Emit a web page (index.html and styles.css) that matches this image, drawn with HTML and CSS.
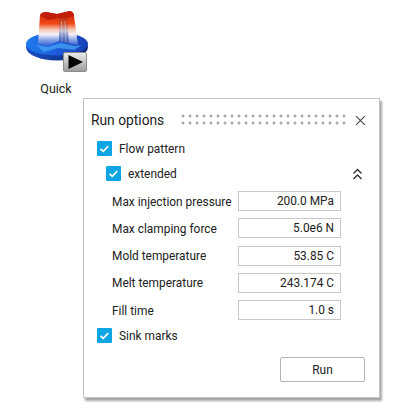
FILE: index.html
```html
<!DOCTYPE html>
<html lang="en">
<head>
    <meta charset="UTF-8">
    <title>Run options</title>
    <link rel="stylesheet" href="styles.css">
</head>
<body>
    <div class="desktop-icon">
        <svg class="quick-icon" width="64" height="64" viewBox="0 0 64 64">
            <defs>
                <linearGradient id="body" gradientUnits="userSpaceOnUse" x1="0" y1="2" x2="0" y2="38">
                    <stop offset="0" stop-color="#c41c08"/>
                    <stop offset="0.35" stop-color="#f04a18"/>
                    <stop offset="0.52" stop-color="#f6c8b8"/>
                    <stop offset="0.65" stop-color="#f4f2f6"/>
                    <stop offset="0.82" stop-color="#7f9ce4"/>
                    <stop offset="1" stop-color="#1f50d2"/>
                </linearGradient>
                <linearGradient id="bodydark" gradientUnits="userSpaceOnUse" x1="0" y1="2" x2="0" y2="38">
                    <stop offset="0" stop-color="#a81808"/>
                    <stop offset="0.35" stop-color="#d04a22"/>
                    <stop offset="0.55" stop-color="#c8c2d2"/>
                    <stop offset="0.75" stop-color="#5a78c4"/>
                    <stop offset="1" stop-color="#173a9e"/>
                </linearGradient>
                <linearGradient id="base" x1="0" y1="0" x2="1" y2="0">
                    <stop offset="0" stop-color="#1f7cf0"/>
                    <stop offset="0.5" stop-color="#1d5ad8"/>
                    <stop offset="1" stop-color="#1740b4"/>
                </linearGradient>
                <linearGradient id="rim" x1="0" y1="0" x2="1" y2="0">
                    <stop offset="0" stop-color="#1850c8"/>
                    <stop offset="0.5" stop-color="#123a9c"/>
                    <stop offset="1" stop-color="#0d2a78"/>
                </linearGradient>
                <linearGradient id="btn" x1="0" y1="0" x2="0" y2="1">
                    <stop offset="0" stop-color="#ececec"/>
                    <stop offset="1" stop-color="#9c9c9c"/>
                </linearGradient>
            </defs>
            <g class="raster">
                <ellipse cx="33" cy="38" rx="31" ry="13.5" fill="url(#rim)"/>
                <ellipse cx="33" cy="35" rx="31" ry="11.5" fill="url(#base)"/>
                <path d="M12 36 L24 38 L36 34 L52 37 L58 36 L50 41 L34 39 L20 43Z" fill="#45a4f6" opacity="0.75"/>
                <path d="M16 6 Q18 3 22 3 L33 5 L46 2 Q50 3 50 7 L54 36 L44 34 L35 32 L24 37 L14 35Z" fill="url(#body)"/>
                <path d="M35 9 L43 9 L45 34 L35 32Z" fill="url(#bodydark)"/>
                <path d="M37.5 12 L38 32 M41 12 L42 33" stroke="#f2f0f6" stroke-width="0.8" opacity="0.5" fill="none"/>
                <path d="M16 6 Q18 3 22 3 L33 5 L46 2 Q50 3 50 7 L43 9 L35 9 L24 11Z" fill="#c01e0a"/>
                <rect x="39.5" y="43.5" width="23" height="19" rx="1.5" fill="url(#btn)" stroke="#8a8a8a"/>
                <path d="M44.5 46 L59 53 L44.5 60Z" fill="#050505"/>
            </g>
        </svg>
        <span class="icon-label">Quick</span>
    </div>

    <div class="panel">
        <div class="panel-head">
            <span class="panel-title">Run options</span>
            <span class="grip"></span>
            <svg class="close" width="11" height="11" viewBox="0 0 11 11">
                <path d="M1 1 L10 10 M10 1 L1 10" stroke="#444" stroke-width="1.1" fill="none"/>
            </svg>
        </div>

        <label class="check">
            <span class="box"><svg width="15" height="15" viewBox="0 0 15 15"><path d="M3.5 7.8 L6.3 10.4 L11.3 5" stroke="#fff" stroke-width="1.7" fill="none"/></svg></span>
            <span class="check-text">Flow pattern</span>
        </label>

        <div class="extended-row">
            <label class="check">
                <span class="box"><svg width="15" height="15" viewBox="0 0 15 15"><path d="M3.5 7.8 L6.3 10.4 L11.3 5" stroke="#fff" stroke-width="1.7" fill="none"/></svg></span>
                <span class="check-text">extended</span>
            </label>
            <svg class="collapse" width="11" height="12" viewBox="0 0 11 12">
                <path d="M1.5 5.5 L5.5 1.5 L9.5 5.5 M1.5 11 L5.5 7 L9.5 11" stroke="#333" stroke-width="1.4" fill="none"/>
            </svg>
        </div>

        <div class="fields">
            <div class="field"><span class="field-label">Max injection pressure</span><div class="value">200.0 MPa</div></div>
            <div class="field"><span class="field-label">Max clamping force</span><div class="value">5.0e6 N</div></div>
            <div class="field"><span class="field-label">Mold temperature</span><div class="value">53.85 C</div></div>
            <div class="field"><span class="field-label">Melt temperature</span><div class="value">243.174 C</div></div>
            <div class="field"><span class="field-label">Fill time</span><div class="value">1.0 s</div></div>
        </div>

        <label class="check check-sink">
            <span class="box"><svg width="15" height="15" viewBox="0 0 15 15"><path d="M3.5 7.8 L6.3 10.4 L11.3 5" stroke="#fff" stroke-width="1.7" fill="none"/></svg></span>
            <span class="check-text">Sink marks</span>
        </label>

        <div class="actions">
            <button class="btn">Run</button>
        </div>
    </div>
</body>
</html>
```

FILE: styles.css
```css
* {
    margin: 0;
    padding: 0;
    box-sizing: border-box;
}

body {
    font-family: Roboto, 'Liberation Sans', sans-serif;
    font-size: 11.9px;
    color: #222;
    background: #fff;
    width: 402px;
    height: 410px;
    overflow: hidden;
    padding-top: 9px;
}

.desktop-icon {
    width: 112px;
    height: 89px;
    display: flex;
    flex-direction: column;
    align-items: center;
}

.quick-icon {
    display: block;
}

.raster {
    filter: blur(0.4px);
}

.icon-label {
    margin-top: 8px;
    line-height: 16px;
    font-size: 12.5px;
}

.panel {
    width: 297px;
    height: 300px;
    margin-left: 83px;
    border: 1px solid #c4c4c4;
    box-shadow: 2px 3px 2px rgba(0, 0, 0, 0.35);
    background: #fff;
    padding: 0 13px;
}

.panel-head {
    display: flex;
    align-items: center;
    height: 42px;
    margin-left: -6px;
}

.panel-title {
    font-size: 13.8px;
    width: 91px;
}

.grip {
    width: 168px;
    height: 14px;
    background-image: radial-gradient(circle, #8c8c8c 1.1px, transparent 1.4px);
    background-size: 7px 7px;
    background-position: -1.5px -0.5px;
}

.close {
    margin-left: 9px;
}

.check {
    display: flex;
    align-items: center;
    gap: 7px;
    height: 15px;
    line-height: 15px;
}

.check-text {
    margin-top: 2px;
}

.box {
    width: 15px;
    height: 15px;
    background: #0ea5e4;
    border-radius: 1px;
    display: block;
}

.box svg {
    display: block;
}

.extended-row {
    display: flex;
    justify-content: space-between;
    align-items: center;
    margin: 10px 0 0 9px;
    height: 15px;
}

.collapse {
    margin-right: 3px;
}

.fields {
    display: flex;
    flex-direction: column;
    gap: 7.25px;
    margin: 10px 0 0 15px;
}

.field {
    display: flex;
    align-items: center;
    justify-content: space-between;
    width: 229px;
    white-space: nowrap;
}

.field-label {
    margin-top: 1px;
}

.value {
    width: 103px;
    height: 20px;
    line-height: 19px;
    border: 1px solid #c8c8c8;
    text-align: right;
    padding-right: 6px;
}

.check-sink {
    margin-top: 8px;
}

.actions {
    display: flex;
    justify-content: flex-end;
    margin: 14px 0 0;
    padding-right: 1px;
}

.btn {
    width: 85px;
    height: 25px;
    background: #fff;
    border: 1px solid #b4b4b4;
    border-radius: 2px;
    font: inherit;
    color: #222;
}
```
